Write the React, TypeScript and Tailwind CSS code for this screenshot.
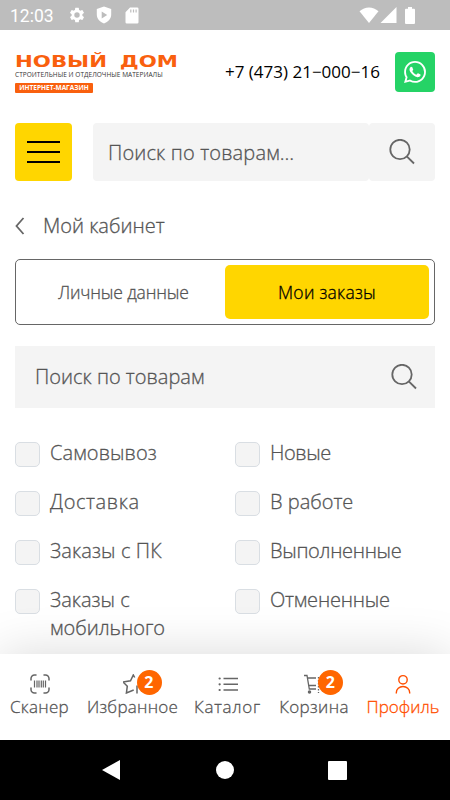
import React from 'react';

const filters = [
  { left: 'Самовывоз', leftTracking: 'tracking-[0.1px]', right: 'Новые', rightTracking: 'tracking-[-0.4px]' },
  { left: 'Доставка', leftTracking: 'tracking-[0.6px]', right: 'В работе', rightTracking: '' },
  { left: 'Заказы с ПК', leftTracking: 'tracking-[0.1px]', right: 'Выполненные', rightTracking: 'tracking-[-0.3px]' },
  { left: 'Заказы с мобильного', leftTracking: '', right: 'Отмененные', rightTracking: 'tracking-[-0.2px]' },
];

const SearchIcon = () => (
  <svg width="26" height="26" viewBox="0 0 26 26" fill="none" stroke="#666" strokeWidth="1.8">
    <circle cx="11" cy="10.500" r="9.7" />
    <path d="M17.8 17.300L25 24.500" />
  </svg>
);

const StatusBar = () => (
  <div className="h-[30px] bg-[#bdbdbd] flex items-center text-white shrink-0 [-webkit-text-stroke:0]">
    <span className="ml-[10px] w-[44px] text-[17.500px] leading-[30px] pt-px font-['Roboto'] font-normal">12:03</span>
    <svg className="ml-[14px]" width="18" height="18" viewBox="0 0 24 24" fill="currentColor">
      <path d="M19.14 12.94c.04-.3.06-.61.06-.94s-.02-.64-.07-.94l2.03-1.58a.5.5 0 0 0 .12-.61l-1.92-3.32a.5.5 0 0 0-.59-.22l-2.39.96a7 7 0 0 0-1.62-.94l-.36-2.54a.5.5 0 0 0-.48-.41h-3.84a.5.5 0 0 0-.47.41l-.36 2.54c-.59.24-1.13.57-1.62.94l-2.39-.96a.5.5 0 0 0-.59.22L2.74 8.87a.5.5 0 0 0 .12.61l2.03 1.58a7 7 0 0 0 0 1.88l-2.03 1.58a.5.5 0 0 0-.12.61l1.92 3.32c.12.22.37.29.59.22l2.39-.96c.5.38 1.03.7 1.62.94l.36 2.54c.05.24.24.41.48.41h3.84c.24 0 .44-.17.47-.41l.36-2.54c.59-.24 1.13-.56 1.62-.94l2.39.96c.22.08.47 0 .59-.22l1.92-3.32a.5.5 0 0 0-.12-.61zM12 15.6a3.6 3.6 0 1 1 0-7.2 3.6 3.6 0 0 1 0 7.2z" />
    </svg>
    <svg className="ml-[10px]" width="16" height="18" viewBox="0 0 16 18" fill="currentColor" fillRule="evenodd">
      <path d="M8 .5L15.2 3v5.500c0 4-3 7.500-7.200 9C3.800 16 .8 12.500.8 8.500V3zM5.700 5.500v7l5.500-3.500z" />
    </svg>
    <svg className="ml-[13px]" width="14" height="17" viewBox="0 0 14 17" fill="currentColor" fillRule="evenodd">
      <path d="M5 .5h7.200a1.300 1.300 0 0 1 1.300 1.300v13.400a1.300 1.300 0 0 1-1.300 1.300H1.800A1.300 1.300 0 0 1 .5 15.200V5.200zM5.200 2.500v3h1.200v-3zM7.900 2.500v3h1.200v-3zM10.500 2.500v3h1.200v-3z" />
    </svg>
    <div className="ml-auto mr-[35px] flex items-center">
      <svg width="20" height="16" viewBox="0 0 20 16" fill="currentColor">
        <path d="M10 16L.5 4.300C6 -.8 14-.8 19.500 4.300z" />
      </svg>
      <svg className="ml-px" width="17" height="16" viewBox="0 0 17 16" fill="currentColor">
        <path d="M16.500 0v16H.5z" />
      </svg>
      <svg className="ml-[8px]" width="10" height="17" viewBox="0 0 10 17" fill="currentColor">
        <path d="M3 0h4v1.800h2a1 1 0 0 1 1 1V16a1 1 0 0 1-1 1H1a1 1 0 0 1-1-1V2.800a1 1 0 0 1 1-1h2z" />
      </svg>
    </div>
  </div>
);

const Header = () => (
  <header className="flex h-[93px] px-[15px] shrink-0 [-webkit-text-stroke:0]">
    <div className="w-[210px] pt-[22px]">
      <div className="h-[19px] leading-[19px] text-[16px] font-bold text-[#f9600e] font-['DejaVu_Sans'] whitespace-nowrap origin-left scale-x-[1.33] w-[120px] [word-spacing:4px]">НОВЫЙ ДОМ</div>
      <div className="h-[8px] leading-[8px] text-[6.500px] font-medium text-[#333] whitespace-nowrap tracking-[0.04px]">СТРОИТЕЛЬНЫЕ И ОТДЕЛОЧНЫЕ МАТЕРИАЛЫ</div>
      <div className="mt-[4px] w-[78px] h-[10px] rounded-[1px] bg-[#f9600e] text-white text-[6.500px] leading-[10px] font-bold text-center whitespace-nowrap">ИНТЕРНЕТ-МАГАЗИН</div>
    </div>
    <div className="pt-[29px] h-[26px] leading-[26px] text-[17px] font-normal text-black whitespace-nowrap">+7 (473) 21−000−16</div>
    <div className="ml-auto mt-[22px] size-[40px] rounded-[4px] bg-[#25d366] flex items-center justify-center">
      <svg width="22" height="22" viewBox="0 0 24 24" fill="#fff">
        <path d="M17.472 14.382c-.297-.149-1.758-.867-2.030-.967-.273-.099-.471-.148-.670.150-.197.297-.767.966-.940 1.164-.173.199-.347.223-.644.075-.297-.150-1.255-.463-2.390-1.475-.883-.788-1.480-1.761-1.653-2.059-.173-.297-.018-.458.130-.606.134-.133.298-.347.446-.520.149-.174.198-.298.298-.497.099-.198.050-.371-.025-.520-.075-.149-.669-1.612-.916-2.207-.242-.579-.487-.500-.669-.510a12.800 12.800 0 0 0-.570-.010c-.198 0-.520.074-.792.372-.272.297-1.040 1.016-1.040 2.479 0 1.462 1.065 2.875 1.213 3.074.149.198 2.096 3.200 5.077 4.487.709.306 1.262.489 1.694.625.712.227 1.360.195 1.871.118.571-.085 1.758-.719 2.006-1.413.248-.694.248-1.289.173-1.413-.074-.124-.272-.198-.570-.347m-5.421 7.403h-.004a9.870 9.870 0 0 1-5.031-1.378l-.361-.214-3.741.982.998-3.648-.235-.374a9.860 9.860 0 0 1-1.510-5.260c.001-5.450 4.436-9.884 9.888-9.884 2.640 0 5.122 1.030 6.988 2.898a9.825 9.825 0 0 1 2.893 6.994c-.003 5.450-4.437 9.884-9.885 9.884m8.413-18.297A11.815 11.815 0 0 0 12.050 0C5.495 0 .160 5.335.157 11.892c0 2.096.547 4.142 1.588 5.945L.057 24l6.305-1.654a11.882 11.882 0 0 0 5.683 1.448h.005c6.554 0 11.890-5.335 11.893-11.893a11.821 11.821 0 0 0-3.480-8.413z" />
      </svg>
    </div>
  </header>
);

const TopSearch = () => (
  <div className="flex h-[58px] px-[15px] shrink-0">
    <button className="w-[57px] rounded-[4px] bg-[#ffd600] flex flex-col items-center justify-center gap-[8px]">
      <span className="w-[33px] h-[2px] bg-black" />
      <span className="w-[33px] h-[2px] bg-black" />
      <span className="w-[33px] h-[2px] bg-black" />
    </button>
    <div className="ml-[21px] w-[276px] rounded-[4px] bg-[#f4f4f4] pl-[15px] text-[20px] leading-[60px] tracking-[0.15px]">Поиск по товарам…</div>
    <div className="flex-1 rounded-[4px] bg-[#f4f4f4] flex items-center justify-center">
      <SearchIcon />
    </div>
  </div>
);

const Tabs = () => (
  <div className="mx-[15px] mt-[19px] h-[66px] rounded-[5px] border border-[#666] p-[5px] flex text-[17.500px] shrink-0">
    <div className="flex-1 pl-px text-center leading-[54px] tracking-[-0.15px]">Личные данные</div>
    <div className="w-[204px] rounded-[5px] bg-[#ffd600] text-black text-center leading-[54px] tracking-[0.25px]">Мои заказы</div>
  </div>
);

const CheckItem = ({ text, tracking }: { text: string; tracking: string }) => (
  <div className="w-[220px] flex shrink-0">
    <span className="mt-[3px] size-[25px] rounded-[5px] border border-[#d9dee3] bg-[#f4f4f4] shrink-0" />
    <span className={'ml-[10px] w-[140px] text-[20px] leading-[28px] ' + tracking}>{text}</span>
  </div>
);

const Badge = () => (
  <span className="absolute -top-[4px] left-[14px] size-[25px] rounded-full bg-[#ff6600] text-white text-[16px] leading-[25px] font-bold text-center [-webkit-text-stroke:0]">2</span>
);

const NavItem = ({ label, className, children }: { label: string; className: string; children: React.ReactNode }) => (
  <div className={'flex flex-col items-center shrink-0 ' + className}>
    <div className="relative h-[20px]">{children}</div>
    <span className="mt-[2px] leading-[22px] whitespace-nowrap">{label}</span>
  </div>
);

const BottomNav = () => (
  <nav className="relative h-[86px] bg-white shadow-[0_0_50px_rgba(0,0,0,0.15)] pt-[20px] pl-[10px] flex text-[17px] shrink-0">
    <NavItem label="Сканер" className="w-[59px] tracking-[0.3px]">
      <svg width="20" height="20" viewBox="0 0 20 20" fill="none" stroke="#666" strokeWidth="1.500" strokeLinecap="round">
        <path d="M1 6V4.500A3.500 3.500 0 0 1 4.500 1H6M14 1h1.500A3.500 3.500 0 0 1 19 4.500V6M19 14v1.500a3.500 3.500 0 0 1-3.500 3.500H14M6 19H4.500A3.500 3.500 0 0 1 1 15.500V14" />
        <path strokeLinecap="butt" strokeWidth="1.200" d="M4.500 6.500v7M7 6.500v7M9 6.500v7M11.300 6.500v7M13.300 6.500v7M15.500 6.500v7" />
      </svg>
    </NavItem>
    <NavItem label="Избранное" className="ml-[18px] w-[91px] tracking-[0.25px]">
      <svg width="20" height="20" viewBox="0 0 20 20" fill="none" stroke="#666" strokeWidth="1.500">
        <path d="M11.700 3.500L10.300 1 7.500 6.800 0 8l4.300 4.200-.9 6.800 7.300-3" />
        <path d="M14 11.500v8" />
      </svg>
      <Badge />
    </NavItem>
    <NavItem label="Каталог" className="ml-[16px] w-[67px] tracking-[0.75px]">
      <svg width="20" height="20" viewBox="0 0 20 20" fill="none" stroke="#666" strokeWidth="1.400">
        <path d="M5.500 4.500H20M5.500 10.300H20M5.500 16H20" />
        <path strokeWidth="2.200" strokeLinecap="round" d="M1.600 4.500h.1M1.600 10.300h.1M1.600 16h.1" />
      </svg>
    </NavItem>
    <NavItem label="Корзина" className="ml-[18px] w-[70px] tracking-[0.35px]">
      <svg width="20" height="20" viewBox="0 0 20 20" fill="none" stroke="#666" strokeWidth="1.300">
        <path d="M0 1.500h3L5.300 15H12M3.500 4H12M4.800 11.500H12" />
        <circle cx="5.500" cy="18" r="1.100" fill="#666" />
        <path strokeDasharray="1.500 1.500" d="M14.500 3v16" />
      </svg>
      <Badge />
    </NavItem>
    <NavItem label="Профиль" className="ml-[17px] w-[74px] text-[#ff4f00]">
      <svg width="20" height="20" viewBox="0 0 20 20" fill="none" stroke="currentColor" strokeWidth="1.400">
        <circle cx="10" cy="5.800" r="4.200" />
        <path d="M3.300 19.500v-.8c0-3.500 3-6.200 6.700-6.200s6.700 2.700 6.700 6.200v.8" />
      </svg>
    </NavItem>
  </nav>
);

const AndroidBar = () => (
  <div className="relative h-[60px] bg-black flex items-center pl-[102px] shrink-0">
    <svg width="18" height="20" viewBox="0 0 18 20" fill="#fff"><path d="M18 0v20L0 10z" /></svg>
    <span className="ml-[96px] size-[18px] rounded-full bg-white" />
    <span className="ml-[94px] size-[19px] rounded-[1px] bg-white" />
  </div>
);

export default function App() {
  return (
    <div className="w-[450px] h-[800px] overflow-hidden bg-white flex flex-col font-['Open_Sans',sans-serif] font-light text-[#555] [-webkit-text-stroke:0.3px]">
      <StatusBar />
      <Header />
      <TopSearch />
      <div className="mt-[30px] h-[29px] pl-[15px] flex items-center shrink-0">
        <svg width="10" height="18" viewBox="0 0 10 18" fill="none" stroke="#666" strokeWidth="1.800"><path d="M8.500 1L1.500 9l7 8" /></svg>
        <span className="ml-[18px] text-[20px] leading-[29px]">Мой кабинет</span>
      </div>
      <Tabs />
      <div className="mx-[15px] mt-[21px] h-[62px] bg-[#f4f4f4] flex items-center justify-between pl-[20px] pr-[18px] text-[20px] shrink-0">
        <span>Поиск по товарам</span>
        <SearchIcon />
      </div>
      <div className="mt-[31px] px-[15px] flex flex-col gap-[21px] flex-1 min-h-0">
        {filters.map((row) => (
          <div key={row.left} className="flex">
            <CheckItem text={row.left} tracking={row.leftTracking} />
            <CheckItem text={row.right} tracking={row.rightTracking} />
          </div>
        ))}
      </div>
      <BottomNav />
      <AndroidBar />
    </div>
  );
}
